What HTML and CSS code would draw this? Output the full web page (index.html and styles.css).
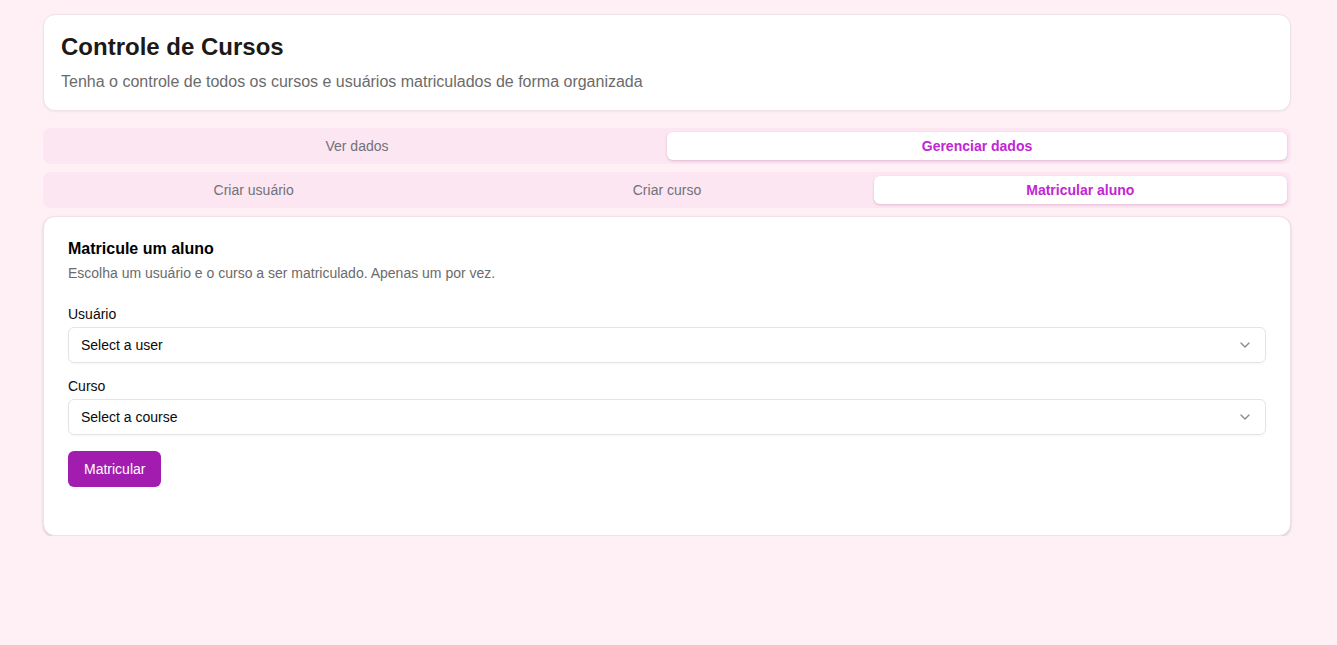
FILE: index.html
```html
<!DOCTYPE html>
<html lang="pt-BR">
<head>
<meta charset="utf-8">
<title>Controle de Cursos</title>
<link rel="stylesheet" href="styles.css">
</head>
<body>
<main class="page">
  <header class="card header">
    <h1 class="title">Controle de Cursos</h1>
    <p class="subtitle">Tenha o controle de todos os cursos e usuários matriculados de forma organizada</p>
  </header>

  <nav class="tabs tabs-2">
    <button class="tab">Ver dados</button>
    <button class="tab active">Gerenciar dados</button>
  </nav>

  <nav class="tabs tabs-3">
    <button class="tab">Criar usuário</button>
    <button class="tab">Criar curso</button>
    <button class="tab active">Matricular aluno</button>
  </nav>

  <section class="card form-card">
    <h2 class="form-title">Matricule um aluno</h2>
    <p class="form-desc">Escolha um usuário e o curso a ser matriculado. Apenas um por vez.</p>

    <div class="field">
      <label class="label">Usuário</label>
      <div class="select">
        <span>Select a user</span>
        <svg class="chev" width="16" height="16" viewBox="0 0 24 24" fill="none" stroke="currentColor" stroke-width="2" stroke-linecap="round" stroke-linejoin="round"><path d="m6 9 6 6 6-6"/></svg>
      </div>
    </div>

    <div class="field">
      <label class="label">Curso</label>
      <div class="select">
        <span>Select a course</span>
        <svg class="chev" width="16" height="16" viewBox="0 0 24 24" fill="none" stroke="currentColor" stroke-width="2" stroke-linecap="round" stroke-linejoin="round"><path d="m6 9 6 6 6-6"/></svg>
      </div>
    </div>

    <button class="btn">Matricular</button>
  </section>
</main>
</body>
</html>
```

FILE: styles.css
```css
* { box-sizing: border-box; }
html, body { margin: 0; padding: 0; }
body {
  background: #fff0f5;
  font-family: "Liberation Sans", Arial, sans-serif;
  color: #0a0a0a;
}
.page {
  max-width: 1251px;
  margin: 0 auto;
  padding: 14px 3px 0 0;
  display: flex;
  flex-direction: column;
}
.card {
  background: #fff;
  border: 1px solid #ebe3e7;
  border-radius: 12px;
  box-shadow: 0 1px 2px rgba(0,0,0,0.05);
}
.header {
  padding: 16px 17px 16px;
  margin-bottom: 17px;
}
.title {
  margin: 0;
  font-size: 24px;
  line-height: 32px;
  font-weight: 700;
  color: #1c1917;
}
.subtitle {
  margin: 7px 0 0;
  font-size: 16px;
  line-height: 24px;
  color: #6b6b6b;
}
.tabs {
  display: grid;
  background: #fce6f1;
  border-radius: 8px;
  padding: 4px;
  height: 36px;
  margin-bottom: 8px;
}
.tabs-2 { grid-template-columns: 1fr 1fr; }
.tabs-3 { grid-template-columns: 1fr 1fr 1fr; }
.tab {
  border: 0;
  background: transparent;
  font-family: inherit;
  font-size: 14px;
  color: #71717a;
  border-radius: 6px;
  padding: 0;
  cursor: pointer;
}
.tab.active {
  background: #fff;
  color: #c026d3;
  font-weight: 700;
  box-shadow: 0 1px 3px rgba(160, 40, 120, 0.18), 0 1px 2px rgba(0,0,0,0.06);
}
.form-card {
  padding: 24px 24px 48px;
  box-shadow: 0 1px 3px rgba(0,0,0,0.12), 0 1px 2px rgba(0,0,0,0.06);
}
.form-title {
  margin: 0;
  font-size: 16px;
  line-height: 16px;
  font-weight: 700;
  color: #000;
}
.form-desc {
  margin: 6px 0 0;
  font-size: 14px;
  line-height: 20px;
  color: #6b6b6b;
}
.field {
  display: flex;
  flex-direction: column;
  margin-bottom: 16px;
}
.form-desc + .field { margin-top: 24px; }
.label {
  font-size: 14px;
  line-height: 14px;
  margin-bottom: 6px;
  color: #0a0a0a;
}
.select {
  height: 36px;
  border: 1px solid #e4e4e7;
  border-radius: 6px;
  padding: 0 12px;
  display: flex;
  align-items: center;
  justify-content: space-between;
  font-size: 14px;
  color: #0a0a0a;
  box-shadow: 0 1px 2px rgba(0,0,0,0.04);
}
.chev { color: #8a8a8a; }
.btn {
  align-self: flex-start;
  height: 36px;
  padding: 0 16px;
  border: 0;
  border-radius: 6px;
  background: #a21caf;
  color: #fff;
  font-family: inherit;
  font-size: 14px;
  cursor: pointer;
}
```
